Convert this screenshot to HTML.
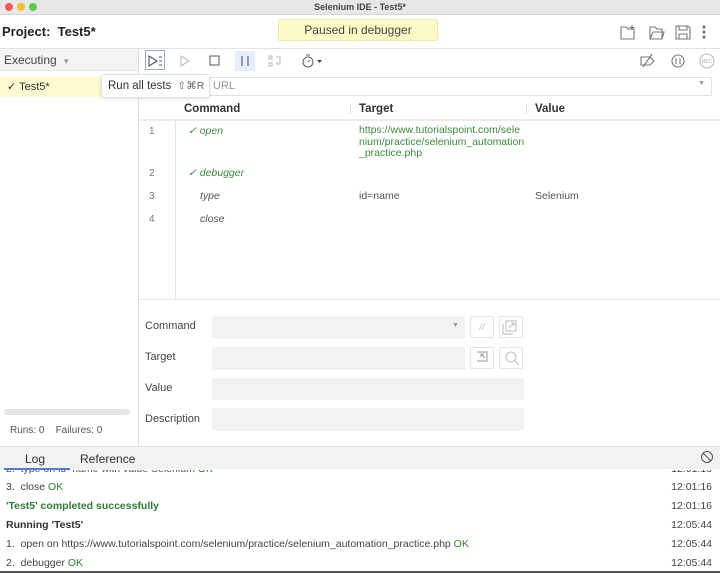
<!DOCTYPE html>
<html><head><meta charset="utf-8"><style>
*{box-sizing:border-box;margin:0;padding:0}
body{width:720px;height:573px;overflow:hidden;font-family:"Liberation Sans",sans-serif;font-size:11px;color:#333;background:#fff;position:relative}
.a{position:absolute}
.t{white-space:nowrap}
.g{color:#2e7d32}
.inp{background:#f2f2f2;border-radius:2px}
.btn{border:1px solid #e4e4e4;border-radius:2px;width:24px;height:22px}
.tm{right:8px;color:#444}
</style></head><body>
<!-- title bar -->
<div class="a" style="left:0;top:0;width:720px;height:15px;background:#e7e7e7;border-bottom:1px solid #d6d6d6"></div>
<div class="a" style="left:5px;top:3px;width:8px;height:8px;border-radius:50%;background:#ee5d55"></div>
<div class="a" style="left:17px;top:3px;width:8px;height:8px;border-radius:50%;background:#f5bd3a"></div>
<div class="a" style="left:29px;top:3px;width:8px;height:8px;border-radius:50%;background:#5fc84a"></div>
<div class="a t" style="left:0;width:720px;top:2px;text-align:center;font-size:9px;font-weight:bold;color:#444">Selenium IDE - Test5*</div>
<!-- header -->
<div class="a t" style="left:2px;top:24px;font-size:13px;font-weight:bold;color:#222">Project:&nbsp; Test5*</div>
<div class="a" style="left:278px;top:19px;width:160px;height:22px;background:#fdfbc5;border:1px solid #ecebb0;border-radius:2px;text-align:center;line-height:20px;font-size:12px;color:#444">Paused in debugger</div>
<svg class="a" style="left:618px;top:22px" width="100" height="20" fill="none" stroke="#777" stroke-width="1.1">
<path d="M3 5h5l2 2h6v10H3z M14 3v5 M11.5 5.5h5"/>
<path d="M32 5h5l2 2h5v10H32z M32 17l3-7h11l-2 7"/>
<path d="M58 4h12l2 2v11H58z M61 4v4h8V4 M61 17v-5h8v5"/>
<circle cx="86" cy="5" r="1" fill="#555"/><circle cx="86" cy="10" r="1" fill="#555"/><circle cx="86" cy="15" r="1" fill="#555"/>
</svg>
<div class="a" style="left:0;top:48px;width:720px;height:1px;background:#e2e2e2"></div>
<!-- left panel -->
<div class="a" style="left:0;top:49px;width:138px;height:22px;background:#f4f4f4;border-bottom:1px solid #e6e6e6"></div>
<div class="a t" style="left:4px;top:53px;font-size:12px;color:#444">Executing <span style="font-size:8px;color:#999">&nbsp;▼</span></div>
<div class="a" style="left:0;top:77px;width:138px;height:20px;background:#fbfad0"></div>
<div class="a t" style="left:7px;top:80px;font-size:11px;color:#333">✓ Test5*</div>
<div class="a" style="left:138px;top:49px;width:1px;height:397px;background:#ddd"></div>
<div class="a" style="left:4px;top:409px;width:126px;height:6px;background:#e6e6e6;border-radius:3px"></div>
<div class="a t" style="left:10px;top:425px;font-size:10px;color:#555">Runs: 0&nbsp;&nbsp;&nbsp;&nbsp;Failures: 0</div>
<!-- toolbar -->
<div class="a" style="left:145px;top:50px;width:20px;height:20px;border:1px solid #9ab;background:#fff"></div>
<svg class="a" style="left:139px;top:49px" width="200" height="24" fill="none" stroke="#666" stroke-width="1.1">
<path d="M10 7v10l8-5z M20 8h3 M20 12h3 M20 16h3" stroke="#556"/>
<path d="M42 7v10l8-5z" stroke="#bbb"/>
<rect x="71" y="7" width="9" height="9"/>
<rect x="96" y="2" width="20" height="20" fill="#e6eefa" stroke="none"/>
<path d="M103 7v10 M109 7v10" stroke="#557"/>
<path d="M130 7h3v3h-3z M130 14h3v3h-3z M137 8h4v7h-4 M137 15l2-2" stroke="#bbb"/>
<circle cx="169" cy="13" r="5"/><path d="M167 6h4 M169 13l2-2"/>
<path d="M178 11h5l-2.5 3z" fill="#444" stroke="none"/>
</svg>
<svg class="a" style="left:636px;top:50px" width="84" height="22" fill="none" stroke="#777" stroke-width="1.1">
<path d="M5 7h9l4 4-4 4H5z M7 17L16 4"/>
<circle cx="42" cy="11" r="6"/><path d="M40 8v6 M44 8v6"/>
<circle cx="71" cy="11" r="7" stroke="#bbb"/>
<text x="71" y="13" font-size="5" fill="#aaa" stroke="none" text-anchor="middle" font-family="Liberation Sans">REC</text>
</svg>
<!-- url bar -->
<div class="a" style="left:200px;top:77px;width:512px;height:19px;border:1px solid #e2e2e2;border-radius:2px"></div>
<div class="a t" style="left:213px;top:80px;color:#999;font-size:11px">URL</div>
<div class="a t" style="left:698px;top:80px;color:#999;font-size:7px">▼</div>
<!-- tooltip -->
<div class="a t" style="left:101px;top:74px;width:109px;height:24px;background:#fff;border:1px solid #e0e0e0;border-radius:3px;box-shadow:0 1px 3px rgba(0,0,0,.12);line-height:22px;padding-left:6px;font-size:11.5px;color:#333">Run all tests <span style="color:#666;font-size:10.5px">&nbsp;⇧⌘R</span></div>
<!-- table header -->
<div class="a t" style="left:184px;top:103px;font-weight:bold;font-size:11.5px;color:#333">Command</div>
<div class="a t" style="left:359px;top:103px;font-weight:bold;font-size:11.5px;color:#333">Target</div>
<div class="a t" style="left:535px;top:103px;font-weight:bold;font-size:11.5px;color:#333">Value</div>
<div class="a" style="left:350px;top:104px;width:1px;height:10px;background:#ddd"></div>
<div class="a" style="left:526px;top:104px;width:1px;height:10px;background:#ddd"></div>
<div class="a" style="left:139px;top:119px;width:581px;height:2px;background:#ececec"></div>
<div class="a" style="left:175px;top:121px;width:1px;height:178px;background:#e2e2e2"></div>
<div class="a" style="left:139px;top:299px;width:581px;height:1px;background:#e6e6e6"></div>
<!-- rows -->
<div class="a t" style="left:149px;top:126px;color:#777;font-size:10px">1</div>
<div class="a t g" style="left:188px;top:125px;font-style:italic;font-size:10.5px">✓ <span style="color:#3c8a3c">open</span></div>
<div class="a" style="left:359px;top:125px;color:#3c8a3c;font-size:10.5px;line-height:11.5px;width:165px">https://www.tutorialspoint.com/sele<br>nium/practice/selenium_automation<br>_practice.php</div>
<div class="a t" style="left:149px;top:168px;color:#777;font-size:10px">2</div>
<div class="a t g" style="left:188px;top:167px;font-style:italic;font-size:10.5px">✓ <span style="color:#3c8a3c">debugger</span></div>
<div class="a t" style="left:149px;top:191px;color:#777;font-size:10px">3</div>
<div class="a t" style="left:200px;top:190px;font-style:italic;font-size:10.5px;color:#555">type</div>
<div class="a t" style="left:359px;top:190px;font-size:10.5px;color:#555">id=name</div>
<div class="a t" style="left:535px;top:190px;font-size:10.5px;color:#555">Selenium</div>
<div class="a t" style="left:149px;top:214px;color:#777;font-size:10px">4</div>
<div class="a t" style="left:200px;top:213px;font-style:italic;font-size:10.5px;color:#555">close</div>
<!-- form -->
<div class="a t" style="left:145px;top:320px;font-size:11px;color:#444">Command</div>
<div class="a t" style="left:145px;top:351px;font-size:11px;color:#444">Target</div>
<div class="a t" style="left:145px;top:382px;font-size:11px;color:#444">Value</div>
<div class="a t" style="left:145px;top:413px;font-size:11px;color:#444">Description</div>
<div class="a inp" style="left:212px;top:316px;width:253px;height:23px"></div>
<div class="a t" style="left:452px;top:322px;color:#999;font-size:7px">▼</div>
<div class="a inp" style="left:212px;top:347px;width:253px;height:23px"></div>
<div class="a inp" style="left:212px;top:378px;width:312px;height:22px"></div>
<div class="a inp" style="left:212px;top:408px;width:312px;height:23px"></div>
<div class="a btn" style="left:470px;top:316px;text-align:center;line-height:20px;color:#bbb;font-size:9px;font-style:italic">//</div>
<div class="a btn" style="left:499px;top:316px"></div>
<div class="a btn" style="left:470px;top:347px"></div>
<div class="a btn" style="left:499px;top:347px"></div>
<svg class="a" style="left:470px;top:316px" width="54" height="54" fill="none" stroke="#bbb" stroke-width="1">
<path d="M36 5h10v10H36z M33 8v10h10 M39 12l5-5 M41 7h3v3"/>
<path d="M7 36h10v9H7 M11 38l4 4 M11 38h3 M11 38v3" stroke="#999"/>
<circle cx="41" cy="41" r="5"/><path d="M45 45l4 4"/>
</svg>
<!-- bottom bar -->
<div class="a" style="left:0;top:446px;width:720px;height:23px;background:#f2f2f2;border-top:1px solid #e0e0e0"></div>
<div class="a t" style="left:25px;top:452px;font-size:12px;color:#333">Log</div>
<div class="a t" style="left:80px;top:452px;font-size:12px;color:#333">Reference</div>
<div class="a" style="left:4px;top:468px;width:66px;height:2px;background:#4a7fd1"></div>
<svg class="a" style="left:699px;top:449px" width="16" height="16" fill="none" stroke="#555" stroke-width="1"><circle cx="8" cy="8" r="5.5"/><path d="M4 4l8 8"/></svg>
<!-- log -->
<div class="a" style="left:0;top:470px;width:720px;height:103px;overflow:hidden">
<div class="a t" style="left:6px;top:-7px;font-size:10.5px;color:#555">2.&nbsp; type on id=name with value Selenium <span class="g">OK</span></div>
<div class="a t tm" style="top:-7px;font-size:10.5px">12:01:16</div>
<div class="a t" style="left:6px;top:11px;font-size:10.5px;color:#444">3.&nbsp; close <span class="g">OK</span></div>
<div class="a t tm" style="top:11px;font-size:10.5px">12:01:16</div>
<div class="a t" style="left:6px;top:30px;font-size:10.5px;color:#2e7d32;font-weight:bold">'Test5' completed successfully</div>
<div class="a t tm" style="top:30px;font-size:10.5px">12:01:16</div>
<div class="a t" style="left:6px;top:49px;font-size:10.5px;color:#333;font-weight:bold">Running 'Test5'</div>
<div class="a t tm" style="top:49px;font-size:10.5px">12:05:44</div>
<div class="a t" style="left:6px;top:68px;font-size:10.5px;color:#444">1.&nbsp; open on https://www.tutorialspoint.com/selenium/practice/selenium_automation_practice.php <span class="g">OK</span></div>
<div class="a t tm" style="top:68px;font-size:10.5px">12:05:44</div>
<div class="a t" style="left:6px;top:87px;font-size:10.5px;color:#444">2.&nbsp; debugger <span class="g">OK</span></div>
<div class="a t tm" style="top:87px;font-size:10.5px">12:05:44</div>
</div>
<div class="a" style="left:0;top:571px;width:720px;height:2px;background:#555"></div>
</body></html>
